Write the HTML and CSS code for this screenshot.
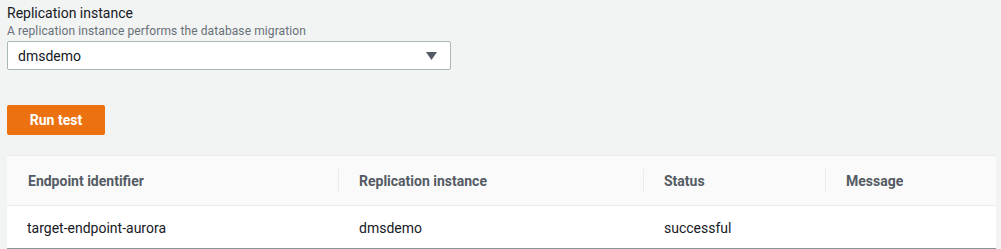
FILE: index.html
```html
<!DOCTYPE html>
<html lang="en">
<head>
  <meta charset="UTF-8">
  <meta name="viewport" content="width=device-width, initial-scale=1.0">
  <title>Test endpoint connection</title>
  <link rel="stylesheet" href="styles.css">
</head>
<body>
  <div class="pagina">
    <div class="campo">
      <label for="instancia" class="rotulo">Replication instance</label>
      <div class="descricao">A replication instance performs the database migration</div>
      <div class="seletor">
        <span class="valor">dmsdemo</span>
        <svg class="seta" width="11" height="8" viewBox="0 0 11 8"><path d="M0 0 H11 L5.5 8 Z" fill="#545b64"/></svg>
      </div>
    </div>

    <button class="botao" id="rodar">Run test</button>

    <table class="tabela">
      <thead>
        <tr>
          <th class="col1"><span>Endpoint identifier</span></th>
          <th class="col2"><span>Replication instance</span></th>
          <th class="col3"><span>Status</span></th>
          <th class="col4"><span>Message</span></th>
        </tr>
      </thead>
      <tbody>
        <tr>
          <td>target-endpoint-aurora</td>
          <td>dmsdemo</td>
          <td>successful</td>
          <td></td>
        </tr>
      </tbody>
    </table>
  </div>
</body>
</html>
```

FILE: styles.css
```css
body {
  margin: 0;
  font-family: Roboto, "Noto Sans", Arial, sans-serif;
  background-color: #f2f3f3;
  color: #16191f;
}
.pagina {
  padding: 4px 4px 0 7px;
}
.campo {
  width: 444px;
}
.rotulo {
  display: block;
  font-size: 14px;
  line-height: 18px;
}
.descricao {
  font-size: 12px;
  line-height: 16px;
  color: #687078;
  margin-top: 1px;
  letter-spacing: 0.1px;
}
.seletor {
  margin-top: 2px;
  height: 27px;
  background-color: #ffffff;
  border: 1px solid #aab7b8;
  border-radius: 2px;
  display: flex;
  align-items: center;
  justify-content: space-between;
  padding: 0 13px 0 10px;
  font-size: 14px;
}
.botao {
  display: block;
  margin-top: 35px;
  width: 98px;
  height: 30px;
  border: none;
  border-radius: 2px;
  background-color: #ec7211;
  color: #ffffff;
  font-family: inherit;
  font-size: 14px;
  font-weight: bold;
  cursor: pointer;
}
.tabela {
  margin-top: 20px;
  width: 989px;
  border-collapse: collapse;
  background-color: #ffffff;
  border-top: 1px solid #eaeded;
  border-bottom: 1px solid #879596;
  font-size: 14px;
}
th {
  background-color: #fafafa;
  color: #545b64;
  font-weight: bold;
  text-align: left;
  height: 48px;
  padding: 1px 0 0 0;
  border-bottom: 1px solid #eaeded;
}
th span {
  display: block;
  padding-left: 20px;
  line-height: 24px;
}
th + th span {
  border-left: 1px solid #eaeded;
}
.col1 { width: 331px; }
.col1 span { padding-left: 21px; }
.col2 { width: 305px; }
.col3 { width: 182px; }
td {
  height: 41px;
  padding: 1px 0 0 20px;
}
td + td {
  padding-left: 21px;
}
```
